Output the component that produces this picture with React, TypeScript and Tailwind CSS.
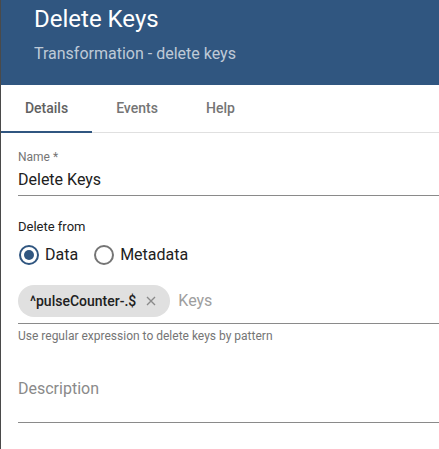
import React, { useState } from 'react';

const tabs = [
  { id: 'Details', width: 'w-[91px]' },
  { id: 'Events', width: 'w-[90px]' },
  { id: 'Help', width: 'w-[77px]' },
];

const Radio: React.FC<{ label: string; checked: boolean; onClick: () => void }> = ({ label, checked, onClick }) => (
  <button onClick={onClick} className="flex items-center gap-[6px] pr-[14px]">
    <span className={`w-[20px] h-[20px] rounded-full border-2 flex items-center justify-center ${checked ? 'border-[#305680]' : 'border-[#757575]'}`}>
      {checked && <span className="w-[10px] h-[10px] rounded-full bg-[#305680]"></span>}
    </span>
    <span className="text-[16px] text-[#212121]">{label}</span>
  </button>
);

const App: React.FC = () => {
  const [tab, setTab] = useState('Details');
  const [source, setSource] = useState<'data' | 'metadata'>('data');

  return (
    <div className="w-[439px] h-[449px] overflow-hidden bg-white border-l border-[#4a4a4a] font-['Roboto',sans-serif]">
      <div className="h-[85px] bg-[#305680] pl-[33px] pt-[3px]">
        <h1 className="text-[24px] leading-[32px] text-white">Delete Keys</h1>
        <p className="mt-[9px] text-[16px] leading-[20px] text-white/70">Transformation - delete keys</p>
      </div>

      <div className="flex border-b border-[#e0e0e0] h-[48px]">
        {tabs.map(t => (
          <button
            key={t.id}
            onClick={() => setTab(t.id)}
            className={`relative ${t.width} h-full text-[14px] font-medium ${tab === t.id ? 'text-[#616161]' : 'text-[#757575]'}`}
          >
            {t.id}
            {tab === t.id && <span className="absolute left-0 right-0 bottom-[-1px] h-[2px] bg-[#305680]"></span>}
          </button>
        ))}
      </div>

      <div className="pl-[17px] pt-[16px] -mr-[20px]">
        <div className="border-b border-[#8a8a8a] pb-[4px]">
          <div className="text-[12px] leading-[16px] text-[#757575]">Name *</div>
          <div className="mt-[4px] text-[16px] leading-[22px] text-[#212121]">Delete Keys</div>
        </div>

        <div className="mt-[23px] text-[13px] leading-[16px] text-[#212121]">Delete from</div>
        <div className="mt-[8px] flex items-center gap-[2px] h-[24px] pl-[1px]">
          <Radio label="Data" checked={source === 'data'} onClick={() => setSource('data')} />
          <Radio label="Metadata" checked={source === 'metadata'} onClick={() => setSource('metadata')} />
        </div>

        <div className="mt-[18px] border-b border-[#8a8a8a] pb-[6px] flex items-center gap-[8px]">
          <span className="flex items-center h-[32px] rounded-full bg-[#e0e0e0] pl-[12px] pr-[11px] gap-[7px]">
            <span className="text-[14px] font-medium text-[#212121]">^pulseCounter-.$</span>
            <svg width="16" height="16" viewBox="0 0 24 24" className="text-[#8a8a8a]">
              <path d="M6 6l12 12M18 6L6 18" stroke="currentColor" strokeWidth="2" fill="none" />
            </svg>
          </span>
          <span className="text-[16px] text-[#9e9e9e]">Keys</span>
        </div>
        <div className="mt-[4px] text-[12px] leading-[16px] text-[#757575]">Use regular expression to delete keys by pattern</div>

        <div className="mt-[35px] border-b border-[#8a8a8a] pb-[23px] text-[16px] leading-[20px] text-[#8a8a8a]">Description</div>
      </div>
    </div>
  );
};

export default App;
